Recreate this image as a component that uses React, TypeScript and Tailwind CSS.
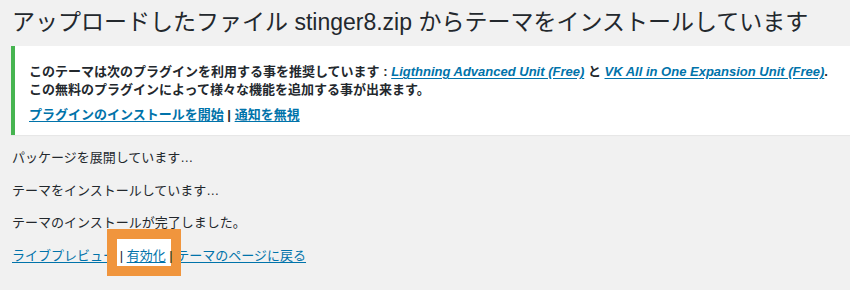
export default function App() {
  const font = "font-['Liberation_Sans','Noto_Sans_CJK_JP',sans-serif]";
  const link = 'text-[#0073aa] underline underline-offset-2';

  return (
    <div className={`w-[850px] h-[290px] overflow-hidden bg-[#f1f1f1] text-[#23282d] ${font}`}>
      <div className="pl-[11px]">
        <h1 className="pt-[7px] pl-px text-[23px] leading-[30px] font-normal whitespace-nowrap">
          アップロードしたファイル stinger8.zip からテーマをインストールしています
        </h1>

        {/* Recommended plugins notice */}
        <div className="mt-[9px] h-[89px] bg-white border-l-4 border-[#46b450] shadow-[0_1px_1px_rgba(0,0,0,0.04)] pl-[14px] pt-[17px] text-[13px] leading-[18px] font-semibold whitespace-nowrap">
          <p>
            このテーマは次のプラグインを利用する事を推奨しています :{' '}
            <a className={`${link} italic`}>Ligthning Advanced Unit (Free)</a> と{' '}
            <a className={`${link} italic`}>VK All in One Expansion Unit (Free)</a>.
          </p>
          <p>この無料のプラグインによって様々な機能を追加する事が出来ます。</p>
          <p className="mt-[7px]">
            <a className={link}>プラグインのインストールを開始</a> | <a className={link}>通知を無視</a>
          </p>
        </div>

        {/* Install log */}
        <div className="pl-px pt-[13px] text-[13px] leading-[19.5px] whitespace-nowrap">
          <p>パッケージを展開しています…</p>
          <p className="mt-[13px]">テーマをインストールしています…</p>
          <p className="mt-[13px]">テーマのインストールが完了しました。</p>
          <p className="mt-[13px]">
            <a className={link}>ライブプレビュー</a>{' '}
            <span className="relative inline-block">
              <span className="absolute -left-[13px] -right-[8px] -top-[17px] -bottom-[11px] border-[10px] border-[#f0953d] bg-white z-10" />
              <span className="relative z-20">
                | <a className={link}>有効化</a> |
              </span>
            </span>{' '}
            <a className={link}>テーマのページに戻る</a>
          </p>
        </div>
      </div>
    </div>
  );
}
